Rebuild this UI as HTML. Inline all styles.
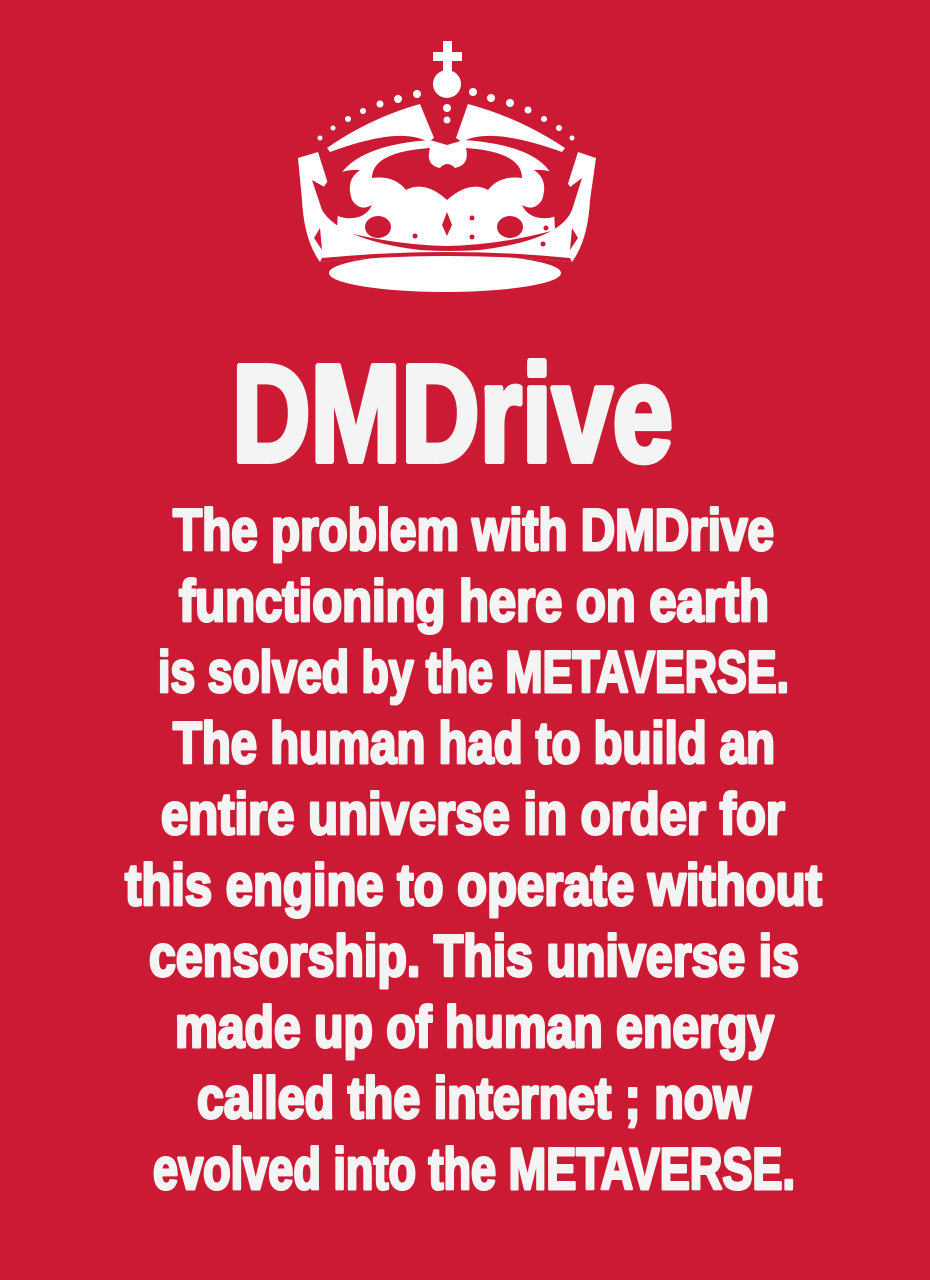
<!DOCTYPE html>
<html><head><meta charset="utf-8"><style>
html,body{margin:0;padding:0;background:#cc1a34;}
body{width:930px;height:1280px;overflow:hidden;position:relative;}
svg{position:absolute;left:0;top:0;}
text{font-family:"Liberation Sans",Arial,sans-serif;font-weight:bold;fill:#f4f4f4;stroke:#f4f4f4;stroke-linejoin:round;}
</style></head><body>
<svg width="930" height="1280" viewBox="0 0 930 1280">
<g fill="#fff">
  <rect x="443" y="41" width="9" height="30"/>
  <rect x="433" y="52" width="29" height="9"/>
  <circle cx="447" cy="84" r="14"/>
  <circle cx="447" cy="108" r="4"/><circle cx="447" cy="120" r="3.5"/>
  <circle cx="417" cy="94" r="4"/><circle cx="398" cy="99" r="4"/><circle cx="380" cy="104" r="3.5"/><circle cx="363" cy="111" r="3"/><circle cx="348" cy="119" r="3"/><circle cx="333" cy="128" r="2.5"/><circle cx="320" cy="138" r="2.5"/>
  <circle cx="473" cy="92" r="4"/><circle cx="491" cy="98" r="4"/><circle cx="510" cy="103" r="4"/><circle cx="528" cy="110" r="3.5"/><circle cx="544" cy="119" r="3"/><circle cx="559" cy="128" r="3"/><circle cx="572" cy="138" r="2.5"/>
  <path d="M327 148 Q370 118 420 104 L434 138 L428 142 Q400 126 330 152 Z"/>
  <path d="M565 148 Q520 118 468 104 L456 138 L462 142 Q490 126 562 152 Z"/>
  <path d="M298 158 L318 152 L330 190 L312 180 L322 210 Q340 240 420 250 Q450 252 480 250 Q560 240 572 210 L582 178 L566 190 L578 152 L596 158 L590 200 Q588 240 572 262 Q450 250 320 262 Q304 240 302 200 Z"/>
  <path d="M340 175 Q360 145 430 140 L447 145 L464 140 Q535 145 552 175 L555 230 Q500 245 447 246 Q394 245 337 230 Z"/>
  <ellipse cx="445" cy="273" rx="116" ry="19"/>
</g>
<g fill="#cc1a34">
  <path d="M372 178 Q372 152 430 148 Q425 165 440 168 Q447 160 455 168 Q470 165 466 148 Q522 152 522 178 Q500 175 488 190 Q470 180 447 200 Q425 180 406 190 Q394 175 372 178 Z"/>
  <path d="M320 195 Q330 168 360 170 Q345 180 352 200 Q360 212 372 205 Q365 220 345 218 Q325 214 320 195 Z"/>
  <path d="M574 195 Q564 168 534 170 Q549 180 542 200 Q534 212 522 205 Q529 220 549 218 Q569 214 574 195 Z"/>
  <ellipse cx="378" cy="227" rx="13" ry="11"/>
  <ellipse cx="510" cy="227" rx="13" ry="11"/>
  <path d="M447 212 L452 225 L447 236 L442 225 Z"/>
  <circle cx="415" cy="236" r="2.5"/><circle cx="472" cy="218" r="2.5"/><circle cx="472" cy="237" r="2.5"/><circle cx="546" cy="228" r="2.5"/><circle cx="543" cy="244" r="2.5"/>
  <path d="M314 238 L320 228 L322 250 Z"/><path d="M578 238 L572 228 L570 250 Z"/>
  <path d="M320 262 Q450 250 572 262 L570 258 Q450 246 322 258 Z"/>
</g>
<text x="232" y="461" font-size="138" stroke-width="6" textLength="441" lengthAdjust="spacingAndGlyphs">DMDrive</text>
<g font-size="58" stroke-width="3">
<text x="173" y="550" textLength="601" lengthAdjust="spacingAndGlyphs">The problem with DMDrive</text>
<text x="179" y="621" textLength="590" lengthAdjust="spacingAndGlyphs">functioning here on earth</text>
<text x="158" y="692" textLength="631" lengthAdjust="spacingAndGlyphs">is solved by the METAVERSE.</text>
<text x="173" y="763" textLength="602" lengthAdjust="spacingAndGlyphs">The human had to build an</text>
<text x="161" y="834" textLength="624" lengthAdjust="spacingAndGlyphs">entire universe in order for</text>
<text x="125" y="905" textLength="697" lengthAdjust="spacingAndGlyphs">this engine to operate without</text>
<text x="149" y="976" textLength="650" lengthAdjust="spacingAndGlyphs">censorship. This universe is</text>
<text x="175" y="1047" textLength="599" lengthAdjust="spacingAndGlyphs">made up of human energy</text>
<text x="197" y="1118" textLength="554" lengthAdjust="spacingAndGlyphs">called the internet ; now</text>
<text x="153" y="1189" textLength="642" lengthAdjust="spacingAndGlyphs">evolved into the METAVERSE.</text>
</g>
</svg>
</body></html>
